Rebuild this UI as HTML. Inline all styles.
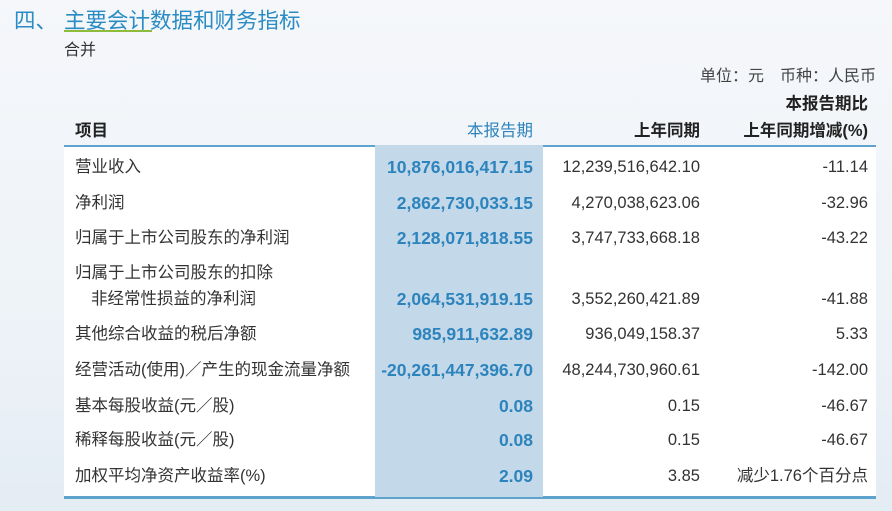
<!DOCTYPE html>
<html><head><meta charset="utf-8"><style>
*{margin:0;padding:0;box-sizing:border-box}
body{width:892px;height:511px;overflow:hidden;position:relative;font-family:"Liberation Sans","Noto Sans CJK SC",sans-serif;background:linear-gradient(180deg,#f5f7fa 0%,#eef3f8 60%,#e4ecf4 100%);color:#222}
.abs{position:absolute;white-space:nowrap}
.t{color:#2b8cc4;font-size:21.5px;top:4px}
.tbl{position:absolute;left:64px;top:145px;width:812px;height:354px;background:#fff;border-top:2px solid #5ea3cc;border-bottom:3px solid #5ea3cc}
.shade{position:absolute;left:375px;top:145px;width:168px;height:352px;background:#c3d8e9}
.row{position:absolute;left:64px;width:812px;font-size:16.5px;height:20px;line-height:20px}
.row span{position:absolute}
.l{left:11px;color:#333}
.a{right:343px;color:#2d84bd;font-weight:bold;font-size:17.5px}
.b{right:176px;color:#333}
.c{right:8px;color:#333}
.h{font-weight:bold;font-size:16.5px;color:#222}
</style></head><body>
<div class="abs t" style="left:14px">四、</div>
<div class="abs t" style="left:64px">主要会计数据和财务指标</div>
<div class="abs" style="left:64px;top:30px;width:88px;height:2px;background:#8dbb3a"></div>
<div class="abs" style="left:64px;top:36px;font-size:16px;color:#333">合并</div>
<div class="abs" style="right:16px;top:62px;font-size:16px;color:#444">单位：元　币种：人民币</div>
<div class="abs h" style="right:24px;top:90px">本报告期比</div>
<div class="abs h" style="left:75px;top:117px">项目</div>
<div class="abs h" style="right:359px;top:117px;color:#2d84bd;font-weight:normal">本报告期</div>
<div class="abs h" style="right:192px;top:117px">上年同期</div>
<div class="abs h" style="right:24px;top:117px">上年同期增减(%)</div>
<div class="tbl"></div>
<div class="shade"></div>
<div class="row" style="top:157px"><span class="l">营业收入</span><span class="a">10,876,016,417.15</span><span class="b">12,239,516,642.10</span><span class="c">-11.14</span></div>
<div class="row" style="top:193px"><span class="l">净利润</span><span class="a">2,862,730,033.15</span><span class="b">4,270,038,623.06</span><span class="c">-32.96</span></div>
<div class="row" style="top:228px"><span class="l">归属于上市公司股东的净利润</span><span class="a">2,128,071,818.55</span><span class="b">3,747,733,668.18</span><span class="c">-43.22</span></div>
<div class="row" style="top:263px"><span class="l">归属于上市公司股东的扣除</span></div>
<div class="row" style="top:289px"><span class="l" style="left:27px">非经常性损益的净利润</span><span class="a">2,064,531,919.15</span><span class="b">3,552,260,421.89</span><span class="c">-41.88</span></div>
<div class="row" style="top:324px"><span class="l">其他综合收益的税后净额</span><span class="a">985,911,632.89</span><span class="b">936,049,158.37</span><span class="c">5.33</span></div>
<div class="row" style="top:360px"><span class="l">经营活动(使用)／产生的现金流量净额</span><span class="a">-20,261,447,396.70</span><span class="b">48,244,730,960.61</span><span class="c">-142.00</span></div>
<div class="row" style="top:396px"><span class="l">基本每股收益(元／股)</span><span class="a">0.08</span><span class="b">0.15</span><span class="c">-46.67</span></div>
<div class="row" style="top:430px"><span class="l">稀释每股收益(元／股)</span><span class="a">0.08</span><span class="b">0.15</span><span class="c">-46.67</span></div>
<div class="row" style="top:466px"><span class="l">加权平均净资产收益率(%)</span><span class="a">2.09</span><span class="b">3.85</span><span class="c">减少1.76个百分点</span></div>
</body></html>
